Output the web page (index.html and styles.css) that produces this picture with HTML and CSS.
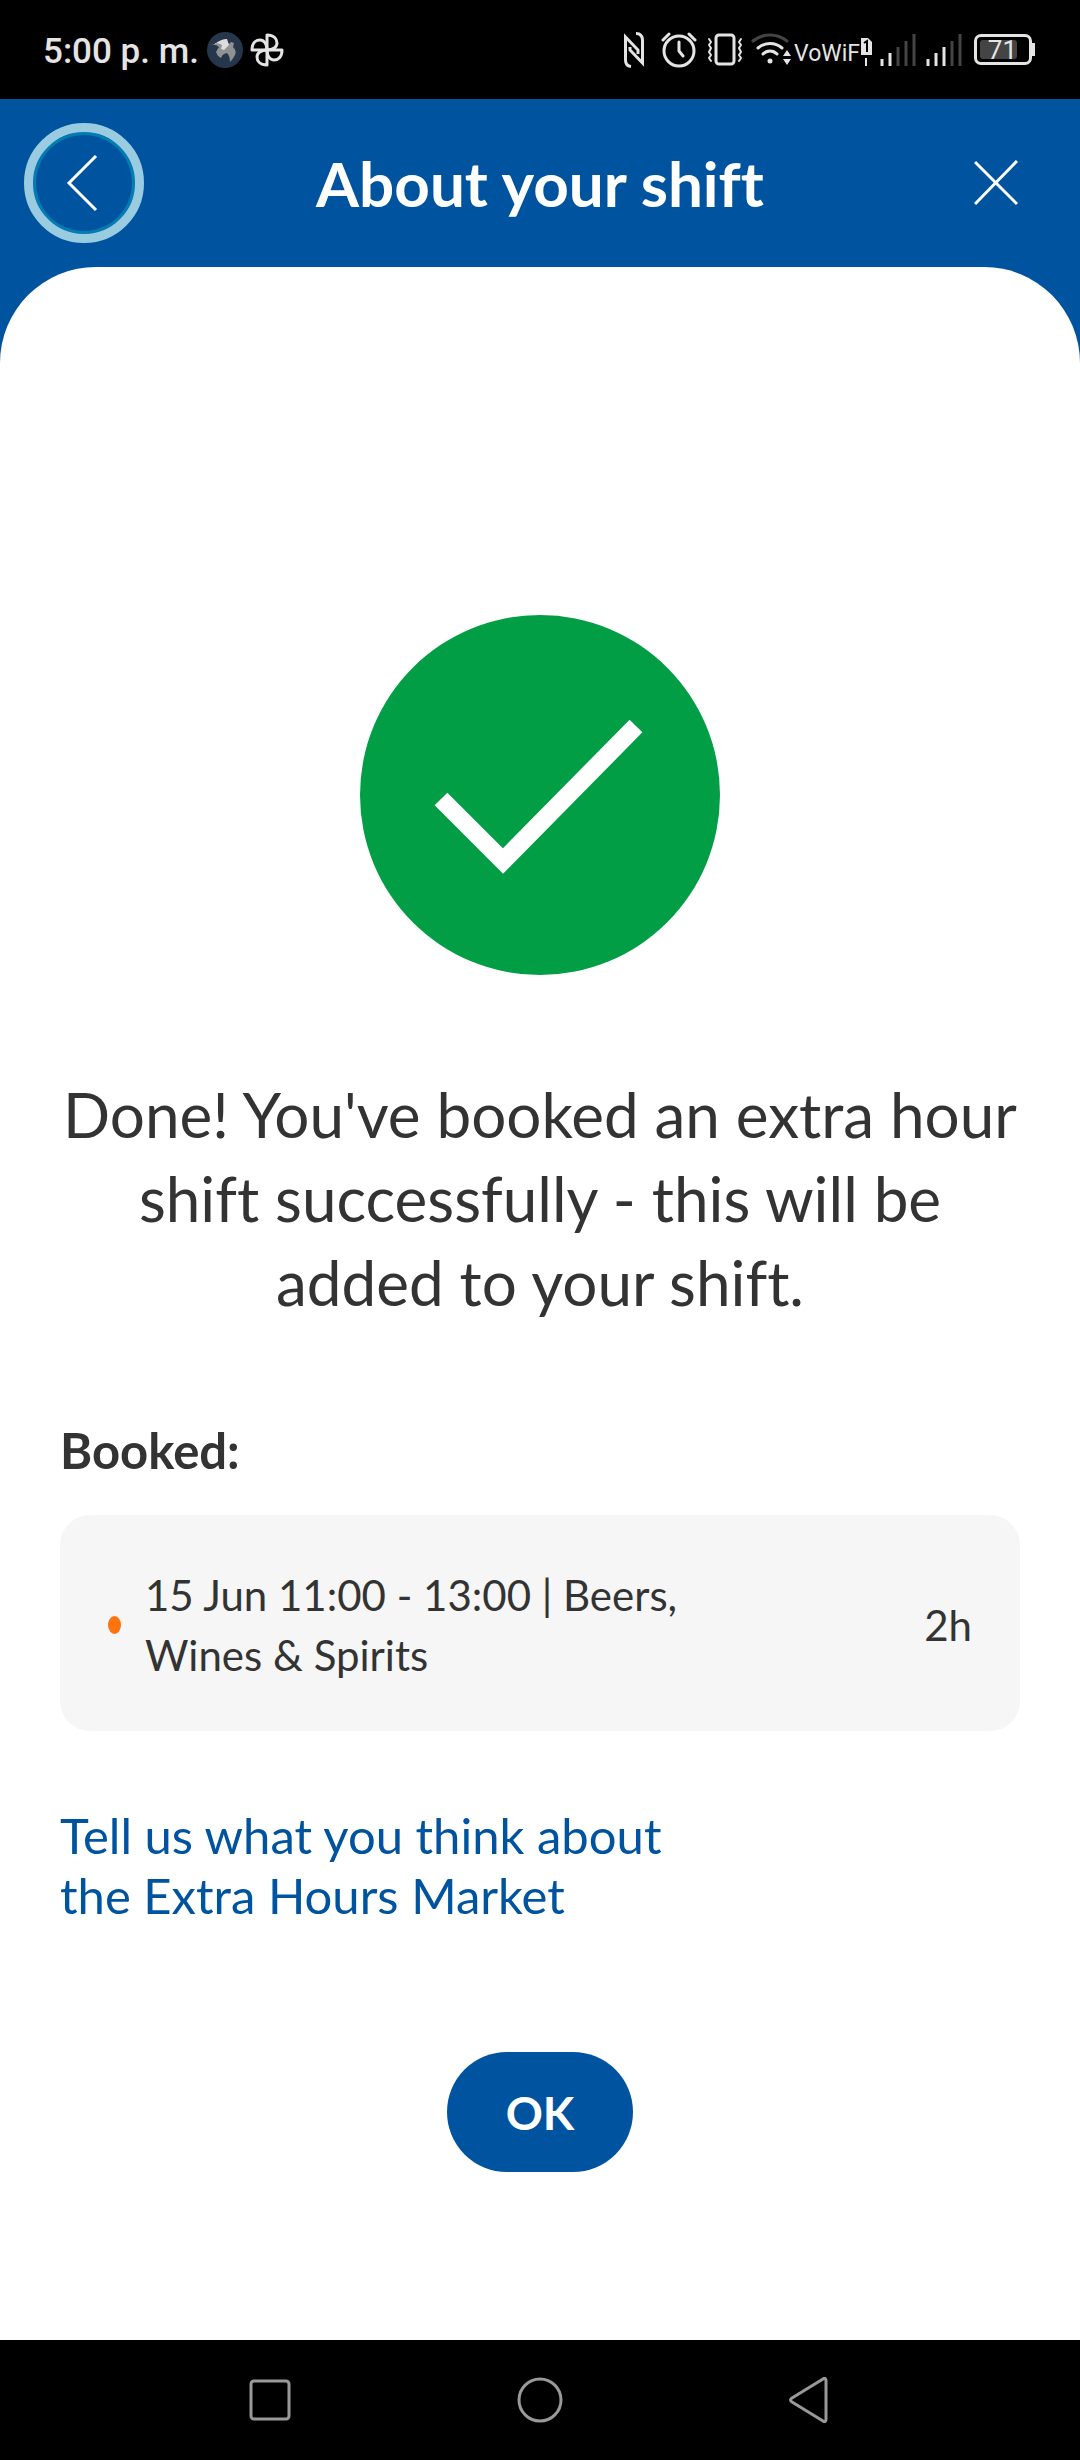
FILE: index.html
```html
<!DOCTYPE html>
<html lang="en">
<head>
<meta charset="utf-8">
<meta name="viewport" content="width=device-width, initial-scale=1">
<title>About your shift</title>
<link rel="stylesheet" href="styles.css">
</head>
<body>
<div class="status">
  <time class="clock">5:00 p. m.</time>
  <svg class="bird" width="36" height="36" viewBox="0 0 36 36" aria-hidden="true">
    <circle cx="18" cy="18" r="18" fill="#26374b"/>
    <path d="M6 13q7-5 13-5l3 4 2-2 3 1-1 4q4 4 2 8-2 4-5 7 0-6-3-9l-3 1q-2 1-3 4l-3-2-2-4 3-5q-3-3-9-2z" fill="#8f9193"/>
    <path d="M8 12q6-5 12-5l2 6-5 5-3-1 1-4q-3-2-7-2z" fill="#dcdcdc"/>
  </svg>
  <svg class="fan" width="34" height="34" viewBox="0 0 34 34" fill="none" stroke="#e4e4e4" stroke-width="3" stroke-linejoin="round" aria-hidden="true">
    <path d="M17 17V2c7 0 10 4 10 8s-4 7-10 7z"/>
    <path d="M17 17h15c0 7-4 10-8 10s-7-4-7-10z"/>
    <path d="M17 17v15c-7 0-10-4-10-8s4-7 10-7z"/>
    <path d="M17 17H2c0-7 4-10 8-10s7 4 7 10z"/>
  </svg>
  <div class="indicators">
    <svg width="20" height="36" viewBox="0 0 20 36" fill="none" stroke="#e4e4e4" stroke-width="3" aria-hidden="true">
      <path d="M7 34.500C3 34 1.500 32 1.500 28V5L14 18v4"/>
      <path d="M12 1.500c5 0 6.500 3 6.500 7V31L6 18v-3"/>
    </svg>
    <svg class="alarm" width="36" height="36" viewBox="0 0 36 36" fill="none" stroke="#e4e4e4" stroke-width="3" stroke-linecap="round" stroke-linejoin="round" aria-hidden="true">
      <circle cx="18" cy="19" r="15"/><path d="M18 10v9l4 5M2 8l6-6M34 8l-6-6"/>
    </svg>
    <svg class="vibrate" width="36" height="36" viewBox="0 0 36 36" fill="none" stroke="#e4e4e4" stroke-width="3" stroke-linecap="round" stroke-linejoin="round" aria-hidden="true">
      <rect x="9" y="3" width="18" height="29" rx="3"/>
      <path d="M2 7l2 3-2 3 2 3-2 4 2 3-2 3 2 3M34 7l-2 3 2 3-2 3 2 4-2 3 2 3-2 3" stroke-width="2"/>
    </svg>
    <svg class="wifi" width="40" height="36" viewBox="0 0 40 36" fill="none" stroke-width="3" stroke-linecap="round" aria-hidden="true">
      <path d="M2 9c10-8 24-8 34 0" stroke="#444"/>
      <path d="M7 16c7-6 17-6 24 0M12 22c4-4 10-4 14 0" stroke="#e4e4e4"/>
      <circle cx="19" cy="29" r="2.500" fill="#e4e4e4"/>
      <path d="M36 18l4 6h-8zM36 33l4-6h-8z" fill="#e4e4e4"/>
    </svg>
    <span class="vowifi">VoWiF</span>
    <svg class="sim" width="12" height="30" viewBox="0 0 12 30" aria-hidden="true">
      <path d="M1 1h7l4 4v13H1z" fill="#e4e4e4"/><path d="M4 6l3-2v11" fill="none" stroke="#000" stroke-width="2"/><path d="M6 21v8" stroke="#e4e4e4" stroke-width="2"/>
    </svg>
    <svg class="signal" width="36" height="34" viewBox="0 0 36 34" stroke-width="3" aria-hidden="true">
      <path d="M2 26v7M10 20v13" stroke="#e4e4e4"/><path d="M18 14v19M26 8v25M34 1v32" stroke="#444"/>
    </svg>
    <svg class="signal" width="36" height="34" viewBox="0 0 36 34" stroke-width="3" aria-hidden="true">
      <path d="M2 26v7M10 20v13M18 14v19" stroke="#e4e4e4"/><path d="M26 8v25M34 1v32" stroke="#444"/>
    </svg>
    <span class="battery"><span class="level">71</span></span>
  </div>
</div>
<header class="bar">
  <button class="icon-btn back" aria-label="Back">
    <svg width="36" height="56" viewBox="0 0 36 56" fill="none" stroke="#fff" stroke-width="3"><path d="M30 1L3 28l27 27"/></svg>
  </button>
  <h1>About your shift</h1>
  <button class="icon-btn" aria-label="Close">
    <svg width="44" height="46" viewBox="0 0 44 46" fill="none" stroke="#fff" stroke-width="3"><path d="M1 2l42 42M43 1L1 44"/></svg>
  </button>
</header>
<main class="sheet">
  <svg class="done" width="360" height="360" viewBox="0 0 360 360" aria-hidden="true">
    <circle cx="180" cy="180" r="180" fill="#029e46"/>
    <path d="M81 184l62 62L276 111" fill="none" stroke="#fff" stroke-width="18"/>
  </svg>
  <p class="message">Done! You've booked an extra hour<br>shift successfully - this will be<br>added to your shift.</p>
  <h2>Booked:</h2>
  <div class="card">
    <span class="dot"></span>
    <p class="slot">15 Jun 11:00 - 13:00 | Beers,<br>Wines &amp; Spirits</p>
    <span class="hours">2h</span>
  </div>
  <a class="feedback" href="#">Tell us what you think about<br>the Extra Hours Market</a>
  <button class="ok">OK</button>
</main>
<nav class="nav" aria-label="System">
  <button aria-label="Recents"><svg width="46" height="46" viewBox="0 0 46 46" fill="none" stroke="#999" stroke-width="3"><rect x="4" y="4" width="38" height="38" rx="3"/></svg></button>
  <button aria-label="Home"><svg width="46" height="46" viewBox="0 0 46 46" fill="none" stroke="#999" stroke-width="3"><circle cx="23" cy="23" r="21"/></svg></button>
  <button aria-label="Back"><svg width="46" height="46" viewBox="0 0 46 46" fill="none" stroke="#999" stroke-width="3" stroke-linejoin="round"><path d="M39 3v40q-1 3-3 1L5 25q-3-2 0-4L36 2q2-2 3 1z"/></svg></button>
</nav>
</body>
</html>
```
FILE: styles.css
```css
* { box-sizing: border-box; }
body {
  margin: 0;
  min-height: 100vh;
  display: flex;
  flex-direction: column;
  background: #00539f;
  color: #333;
  font-family: Lato, "Open Sans", sans-serif;
  font-variant-ligatures: none;
}
h1, h2, p { margin: 0; }
button {
  padding: 0;
  border: 0;
  background: none;
  color: #fff;
  font: inherit;
}
svg { display: block; flex: none; }

.status {
  display: flex;
  align-items: center;
  height: 99px;
  padding: 0 48px 0 43px;
  background: #000;
  color: #e4e4e4;
  font-family: Roboto, sans-serif;
}
.clock { padding-top: 4px; font-size: 35px; font-weight: 500; line-height: 48px; }
.bird { margin-left: 8px; }
.fan { margin-left: 7px; }
.indicators { display: flex; align-items: center; margin-left: auto; }
.alarm { margin-left: 17px; }
.vibrate { margin-left: 10px; }
.wifi { margin-left: 8px; }
.vowifi {
  margin-left: 3px;
  padding-top: 8px;
  font-size: 23px;
  line-height: 32px;
}
.sim { margin-top: 5px; }
.signal { margin-left: 8px; }
.signal + .signal { margin-left: 10px; }
.battery {
  position: relative;
  display: flex;
  width: 58px;
  height: 31px;
  margin-left: 12px;
  padding: 3px;
  border: 3px solid #e4e4e4;
  border-radius: 7px;
}
.battery::after {
  content: "";
  position: absolute;
  top: 6px;
  right: -6px;
  width: 3px;
  height: 13px;
  background: #e4e4e4;
}
.level {
  width: 37px;
  background: #444;
  border-radius: 3px;
  font-size: 26px;
  line-height: 20px;
  text-align: right;
}

.bar {
  display: flex;
  align-items: center;
  justify-content: space-between;
  height: 168px;
  padding: 0 24px;
  color: #fff;
}
h1 { font-size: 62px; line-height: 72px; font-weight: 700; }
.icon-btn {
  display: grid;
  place-items: center;
  width: 120px;
  height: 120px;
  border-radius: 50%;
}
.back { border: 9px solid #99cce1; box-shadow: inset 0 0 0 3px #007eb3; }

.sheet {
  flex: 1;
  display: flex;
  flex-direction: column;
  padding: 348px 60px 168px;
  background: #fff;
  border-radius: 96px 96px 0 0;
}
.done { align-self: center; }
.message {
  margin: 97px -20px 0;
  font-size: 62px;
  line-height: 84px;
  text-align: center;
}
h2 { margin-top: 96px; font-size: 49px; line-height: 60px; font-weight: 700; }
.card {
  display: flex;
  align-items: center;
  margin-top: 35px;
  padding: 50px 48px 46px;
  background: #f6f6f6;
  border-radius: 30px;
  font-size: 42px;
  line-height: 60px;
}
.dot { width: 13px; height: 18px; border-radius: 50%; background: #ff730f; }
.slot { margin-left: 24px; }
.hours { margin-left: auto; }
.feedback {
  align-self: flex-start;
  margin-top: 74px;
  color: #00539f;
  font-size: 49px;
  line-height: 60px;
  text-decoration: none;
}
.ok {
  align-self: center;
  width: 186px;
  height: 120px;
  margin-top: 127px;
  border-radius: 60px;
  background: #00539f;
  font-size: 46px;
  font-weight: 700;
}

.nav {
  display: flex;
  align-items: center;
  justify-content: center;
  gap: 224px;
  height: 120px;
  background: #000;
}
```
